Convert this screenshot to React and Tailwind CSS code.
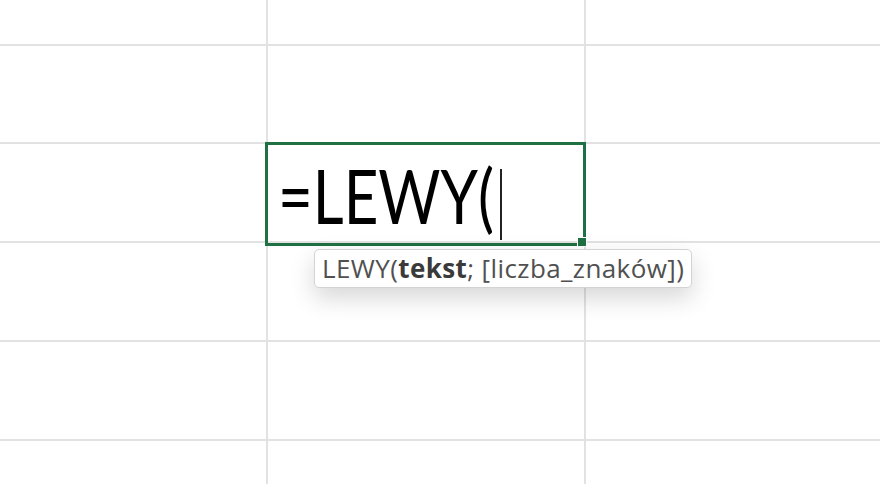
export default function App() {
  const rows = [46, 98, 99, 99, 99, 43];
  const cols = ['w-[268px]', 'w-[318px]', 'flex-1'];

  return (
    <div className="relative w-[880px] h-[484px] overflow-hidden bg-white" style={{ fontFamily: 'Lato, "Open Sans", sans-serif' }}>
      <div className="flex flex-col">
        {rows.map((h, r) => (
          <div key={r} className={`flex ${r < rows.length - 1 ? 'border-b-2 border-[#e2e2e2]' : ''}`} style={{ height: h }}>
            {cols.map((c, i) => (
              <div key={i} className={`${c} ${i < 2 ? 'border-r-2 border-[#e2e2e2]' : ''}`} />
            ))}
          </div>
        ))}
      </div>

      {/* active cell */}
      <div className="absolute left-[265px] top-[142px] w-[321px] h-[104px] border-[3px] border-[#1f7042]">
        <div className="flex items-center h-full pl-[10px] pt-[2px]">
          <span className="w-[222px] overflow-visible whitespace-nowrap">
            <span className="inline-block origin-left scale-x-[0.79] text-[76px] leading-none text-black">=LEWY(</span>
          </span>
          <span className="self-end mb-[3px] w-[2px] h-[71px] bg-[#222]" />
        </div>
      </div>
      <div className="absolute left-[577px] top-[237px] w-[10px] h-[10px] bg-[#1f7042] border border-white" />

      {/* function tooltip */}
      <div
        className="absolute left-[314px] top-[249px] h-[39px] px-[7px] flex items-center rounded-[5px] border border-[#d3d3d3] bg-white shadow-[0_10px_24px_rgba(0,0,0,0.16)] text-[26px] tracking-[0.4px] text-[#505050] whitespace-nowrap"
        style={{ fontFamily: '"Open Sans", Lato, sans-serif' }}
      >
        LEWY(<b className="font-bold text-[#3a3a3a]">tekst</b>; [liczba_znaków])
      </div>
    </div>
  );
}
